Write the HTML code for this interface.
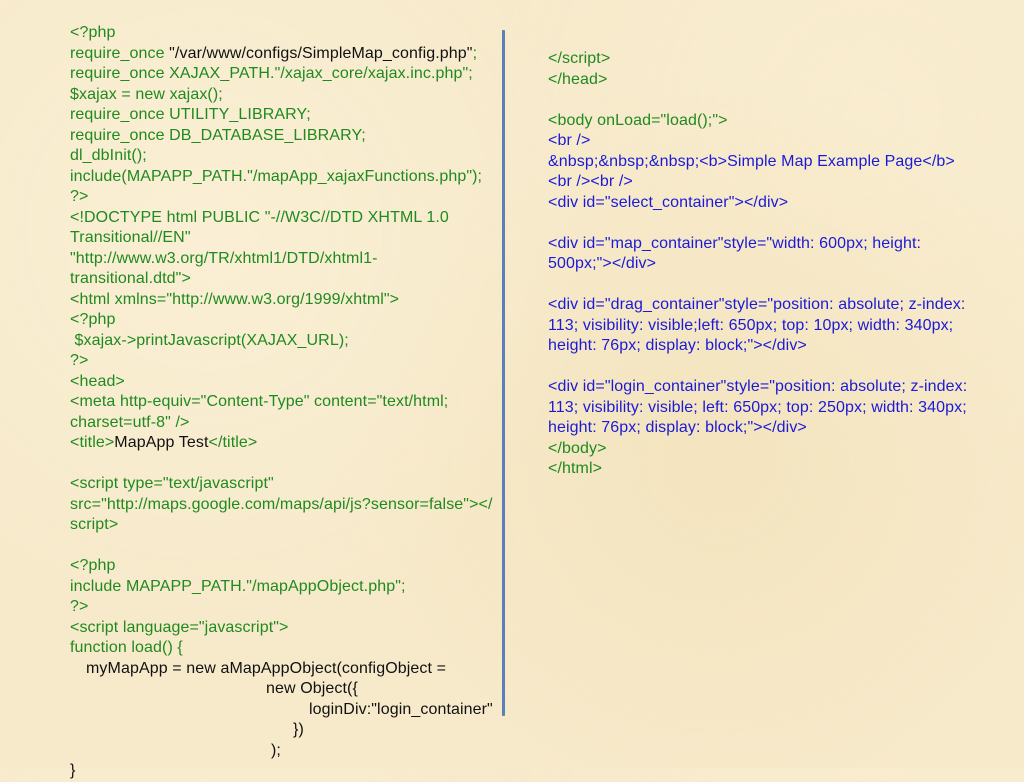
<!DOCTYPE html>
<html><head><meta charset="utf-8"><style>
html,body{margin:0;padding:0;width:1024px;height:768px;overflow:hidden}
body{background:#f7eacb;background-image:radial-gradient(circle at 20% 30%,#faefd4 0,transparent 40%),radial-gradient(circle at 70% 60%,#f4e4bf 0,transparent 45%),radial-gradient(circle at 85% 15%,#f9edd0 0,transparent 35%);font-family:"Liberation Sans",sans-serif;font-size:16px;}
.col{position:absolute;line-height:20.5px;white-space:pre;color:#1f8a1f;letter-spacing:0.1px}
.k{color:#111}
.b{color:#1a1ad8}
.vl{position:absolute;left:502px;top:30px;width:3px;height:686px;background:#5b80b8;border-radius:1px}
</style></head><body>
<div class="vl"></div>
<div class="col" style="left:70px;top:23px">&lt;?php
require_once <span class="k">"/var/www/configs/SimpleMap_config.php"</span>;
require_once XAJAX_PATH."/xajax_core/xajax.inc.php";
$xajax = new xajax();
require_once UTILITY_LIBRARY;
require_once DB_DATABASE_LIBRARY;
dl_dbInit();
include(MAPAPP_PATH."/mapApp_xajaxFunctions.php");
?&gt;
&lt;!DOCTYPE html PUBLIC "-//W3C//DTD XHTML 1.0
Transitional//EN"
"http://www.w3.org/TR/xhtml1/DTD/xhtml1-
transitional.dtd"&gt;
&lt;html xmlns="http://www.w3.org/1999/xhtml"&gt;
&lt;?php
 $xajax-&gt;printJavascript(XAJAX_URL);
?&gt;
&lt;head&gt;
&lt;meta http-equiv="Content-Type" content="text/html;
charset=utf-8" /&gt;
&lt;title&gt;<span class="k">MapApp Test</span>&lt;/title&gt;

&lt;script type="text/javascript"
src="http://maps.google.com/maps/api/js?sensor=false"&gt;&lt;/
script&gt;

&lt;?php
include MAPAPP_PATH."/mapAppObject.php";
?&gt;
&lt;script language="javascript"&gt;
function load() {
<span class="k" style="padding-left:16px">myMapApp = new aMapAppObject(configObject =</span>
<span class="k" style="padding-left:196px">new Object({</span>
<span class="k" style="padding-left:239px">loginDiv:"login_container"</span>
<span class="k" style="padding-left:223px">})</span>
<span class="k" style="padding-left:201px">);</span>
<span class="k">}</span></div>
<div class="col" style="left:548px;top:49px">&lt;/script&gt;
&lt;/head&gt;

&lt;body onLoad="load();"&gt;
<span class="b">&lt;br /&gt;
&amp;nbsp;&amp;nbsp;&amp;nbsp;&lt;b&gt;Simple Map Example Page&lt;/b&gt;
&lt;br /&gt;&lt;br /&gt;
&lt;div id="select_container"&gt;&lt;/div&gt;

&lt;div id="map_container"style="width: 600px; height:
500px;"&gt;&lt;/div&gt;

&lt;div id="drag_container"style="position: absolute; z-index:
113; visibility: visible;left: 650px; top: 10px; width: 340px;
height: 76px; display: block;"&gt;&lt;/div&gt;

&lt;div id="login_container"style="position: absolute; z-index:
113; visibility: visible; left: 650px; top: 250px; width: 340px;
height: 76px; display: block;"&gt;&lt;/div&gt;</span>
&lt;/body&gt;
&lt;/html&gt;</div>
</body></html>
